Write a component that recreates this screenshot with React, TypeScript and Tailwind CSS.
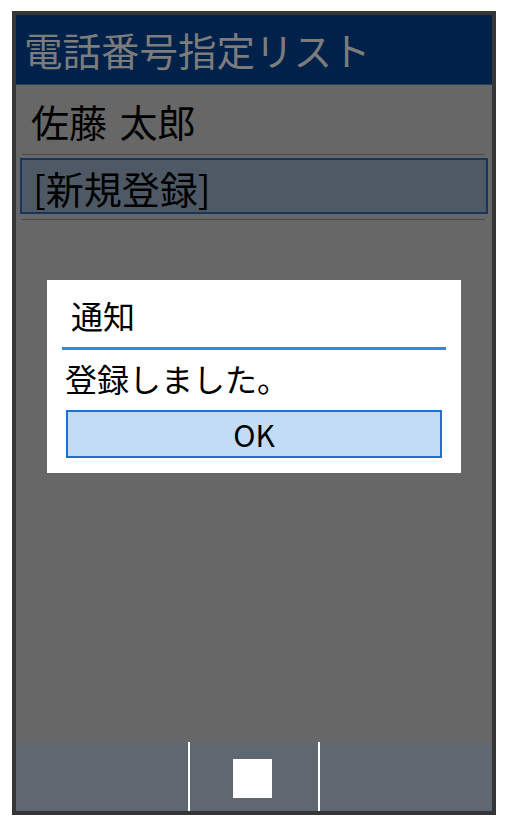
const jp = "font-['Noto_Sans_CJK_JP','Noto_Sans',sans-serif]";

function Header() {
  return (
    <div className="h-[70px] bg-[#00224a] flex items-center pl-[8px] border-b border-[#26405e]">
      <span className="text-[38.5px] leading-none text-[#7c7c7c]">
        電話番号指定リスト
      </span>
    </div>
  );
}

function NoticeDialog() {
  return (
    <div className="absolute left-[31px] top-[195px] w-[414px] h-[193px] bg-white flex flex-col px-[15px]">
      <div className="h-[67px] flex items-center pl-[9px] pt-[3px]">
        <span className="text-[32px] leading-none text-black">通知</span>
      </div>
      <div className="h-[3px] bg-[#2a8ce6]" />
      <div className="h-[60px] flex items-center pl-[3px] pb-[4px]">
        <span className="text-[32px] leading-none text-black">登録しました。</span>
      </div>
      <button
        type="button"
        className="ml-[4px] w-[376px] h-[48px] border-2 border-[#1e6fd0] bg-[#c2dcf8] flex items-center justify-center text-[30px] leading-none text-black"
      >
        OK
      </button>
    </div>
  );
}

export default function App() {
  return (
    <div className={`min-h-screen bg-white pt-[11px] pl-[12px] ${jp}`}>
      <div className="w-[484px] h-[804px] border-4 border-[#363636] flex flex-col">
        <Header />

        {/* List */}
        <div className="relative flex-1 bg-[#676767]">
          <div className="h-[69px] flex items-center pl-[15px] pt-[2px]">
            <span className="text-[38px] leading-none text-black [word-spacing:4px]">
              佐藤 太郎
            </span>
          </div>
          <div className="h-px bg-[#4a4a4a] ml-[6px] mr-[7px]" />
          <div className="mt-[3px] mx-[4px] h-[56px] border-2 border-[#15345e] bg-[#4e5965] flex items-center pl-[11px] pt-[3px]">
            <span className="text-[38px] leading-none text-black">[新規登録]</span>
          </div>
          <div className="mt-[5px] h-px bg-[#4a4a4a] ml-[6px] mr-[7px]" />

          <NoticeDialog />
        </div>

        {/* Soft keys */}
        <div className="h-[69px] bg-[#5f6870] flex">
          <div className="w-[172px]" />
          <div className="w-[2px] bg-white" />
          <div className="w-[128px] flex items-center pl-[43px]">
            <div className="w-[39px] h-[39px] bg-white mt-[4px]" />
          </div>
          <div className="w-[2px] bg-white" />
          <div className="flex-1" />
        </div>
      </div>
    </div>
  );
}
